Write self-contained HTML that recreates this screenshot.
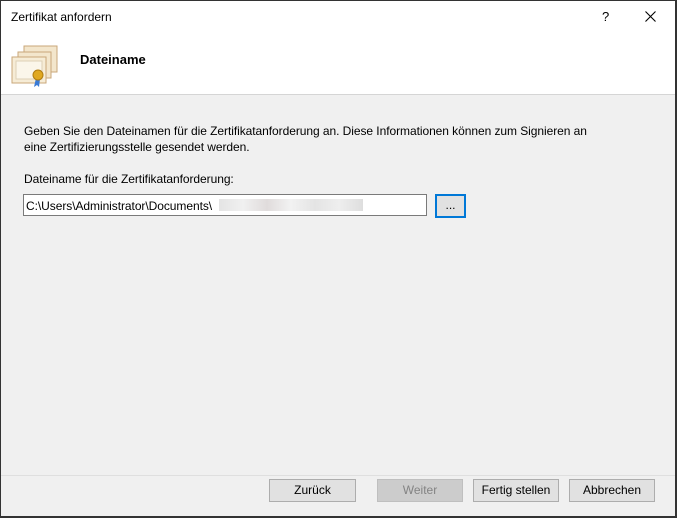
<!DOCTYPE html>
<html><head><meta charset="utf-8"><style>
*{margin:0;padding:0;box-sizing:border-box}
body{width:677px;height:518px;overflow:hidden;font-family:"Liberation Sans",sans-serif;font-size:12px;color:#000;background:#f0f0f0;position:relative}
.frame{position:absolute;left:0;top:0;width:677px;height:518px;border:1px solid #333;border-right-width:2px;border-bottom-width:2px}
.hdr{position:absolute;left:1px;top:0;width:674px;height:95px;background:#fff;border-bottom:1px solid #d5d5d5}
.t{position:absolute;white-space:nowrap}
.s{letter-spacing:-0.06px}
.btn{position:absolute;top:479px;height:23px;background:#e1e1e1;border:1px solid #adadad;text-align:center;line-height:21px}
</style></head><body>
<div class="hdr"></div>
<div class="t" style="left:11px;top:10px">Zertifikat anfordern</div>
<div class="t" style="left:602px;top:9px;font-size:13px">?</div>
<svg style="position:absolute;left:645px;top:11px" width="11" height="11"><path d="M0.5 0.5L10.5 10.5M10.5 0.5L0.5 10.5" stroke="#000" stroke-width="1.1"/></svg>
<svg style="position:absolute;left:10px;top:44px" width="50" height="44">
<rect x="14" y="2" width="33" height="26" fill="#f3e6cc" stroke="#c9a77a"/>
<rect x="8" y="8" width="33" height="26" fill="#f3e6cc" stroke="#c9a77a"/>
<rect x="2" y="13" width="34" height="26" fill="#f6ecd6" stroke="#c9a77a"/>
<rect x="6" y="17" width="26" height="18" fill="#fbf6ea" stroke="#ddd0b6"/>
<path d="M26 34l-2 9 3-2 2 2 1-8z" fill="#3a7ad5"/>
<circle cx="28" cy="31" r="5" fill="#e0a820" stroke="#b07c10"/>
</svg>
<div class="t" style="left:80px;top:52px;font-size:13px;font-weight:bold">Dateiname</div>
<div class="t s" style="left:24px;top:124px">Geben Sie den Dateinamen für die Zertifikatanforderung an. Diese Informationen können zum Signieren an</div>
<div class="t s" style="left:24px;top:140px">eine Zertifizierungsstelle gesendet werden.</div>
<div class="t s" style="left:24px;top:172px">Dateiname für die Zertifikatanforderung:</div>
<div style="position:absolute;left:23px;top:194px;width:404px;height:22px;background:#fff;border:1px solid #7a7a7a"></div>
<div class="t s" style="left:26px;top:199px">C:\Users\Administrator\Documents\</div>
<div style="position:absolute;left:219px;top:199px;width:144px;height:12px;background:linear-gradient(90deg,#e4e4e4,#f0f0f0,#e0dcdc,#f2f2f2,#e4e4e4,#eeeeee,#dedede)"></div>
<div style="position:absolute;left:435px;top:194px;width:31px;height:24px;background:#e1e1e1;border:2px solid #0078d7;text-align:center;line-height:18px">...</div>
<div style="position:absolute;left:1px;top:475px;width:674px;height:1px;background:#dfdfdf"></div>
<div class="btn" style="left:269px;width:87px">Zurück</div>
<div class="btn" style="left:377px;width:86px;background:#cccccc;border-color:#bfbfbf;color:#838383">Weiter</div>
<div class="btn" style="left:473px;width:86px">Fertig stellen</div>
<div class="btn" style="left:569px;width:86px">Abbrechen</div>
<div class="frame"></div>
</body></html>
